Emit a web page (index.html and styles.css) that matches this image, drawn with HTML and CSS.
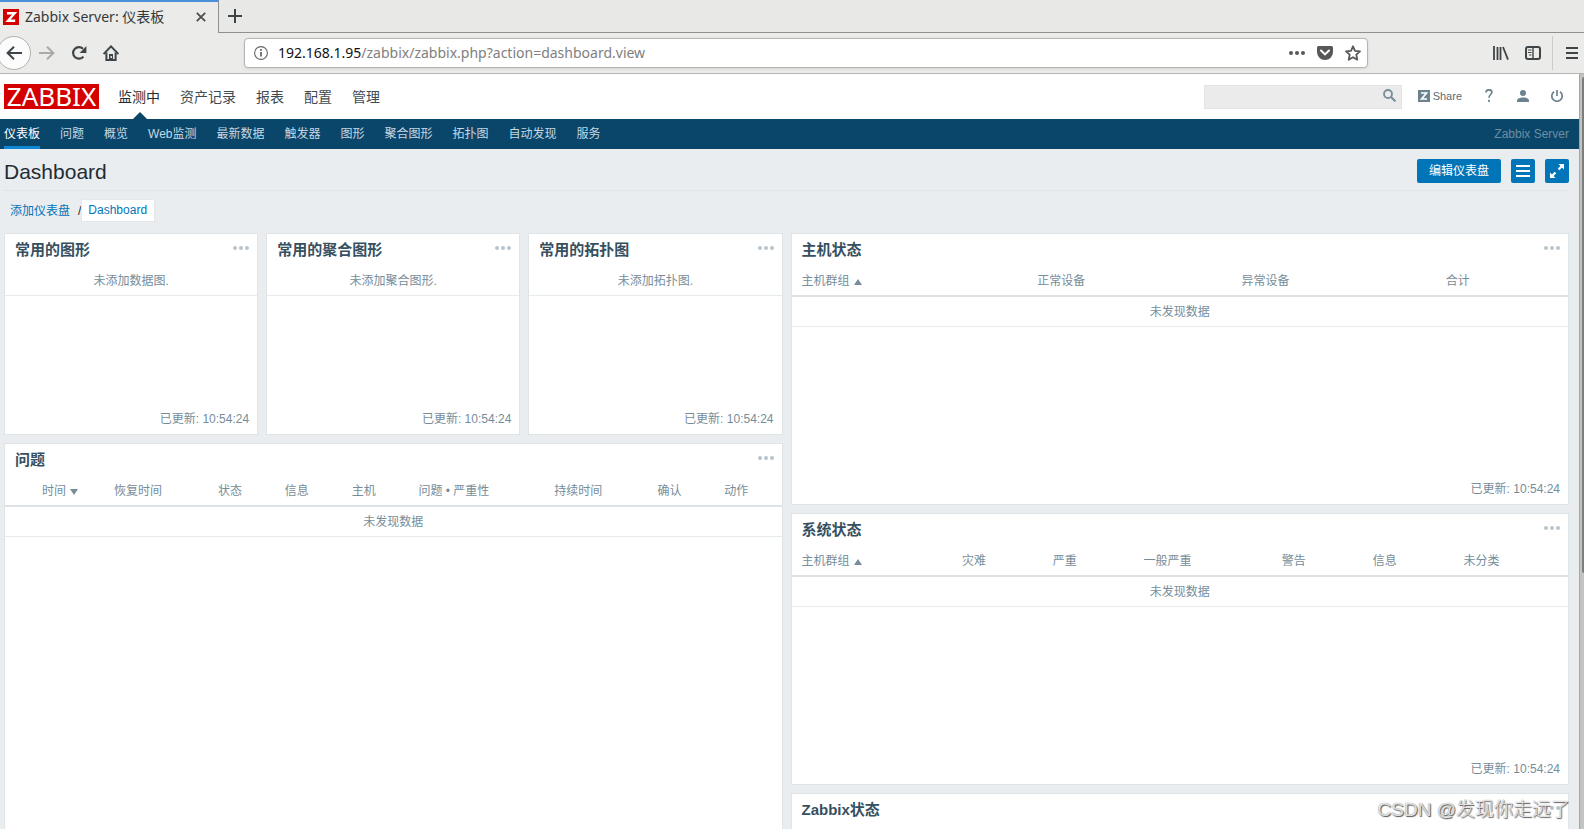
FILE: index.html
```html
<!DOCTYPE html>
<html lang="zh-CN">
<head>
<meta charset="utf-8">
<title>Zabbix Server: 仪表板</title>
<link rel="stylesheet" href="styles.css">
</head>
<body>
<div class="browser">
  <div class="tabstrip">
    <div class="tab">
      <span class="favicon" aria-hidden="true"><svg width="16" height="16" viewBox="0 0 16 16"><rect width="16" height="16" fill="#d40000"/><path d="M4 4.2h7.6L5 11.8h7.2" fill="none" stroke="#fff" stroke-width="2.4"/></svg></span>
      <span class="tab-title">Zabbix Server: 仪表板</span>
      <button class="plain tab-close" aria-label="关闭标签"><svg width="10" height="10" viewBox="0 0 10 10"><path d="M.8.8l8.4 8.4M9.2.8L.8 9.2" stroke="#4a4f50" stroke-width="1.8"/></svg></button>
    </div>
    <button class="plain tab-new" aria-label="新标签"><svg width="14" height="14" viewBox="0 0 14 14"><path d="M7 0v14M0 7h14" stroke="#3f4547" stroke-width="2"/></svg></button>
  </div>
  <div class="toolbar">
    <button class="plain back" aria-label="后退"><svg width="16" height="14" viewBox="0 0 16 14"><path d="M16 7H1.5M8 .8L1.6 7 8 13.2" fill="none" stroke="#3f4547" stroke-width="2"/></svg></button>
    <button class="plain nav-btn" aria-label="前进"><svg width="16" height="14" viewBox="0 0 16 14"><path d="M0 7h14.5M8 .8L14.4 7 8 13.2" fill="none" stroke="#a9abaa" stroke-width="2"/></svg></button>
    <button class="plain nav-btn" aria-label="刷新"><svg width="16" height="16" viewBox="0 0 16 16"><path d="M12.4 11.6A5.8 5.8 0 1 1 12 3.8" fill="none" stroke="#3f4547" stroke-width="2.2"/><path d="M15.4 1v7H8.6z" fill="#3f4547"/></svg></button>
    <button class="plain nav-btn" aria-label="主页"><svg width="16" height="16" viewBox="0 0 16 16"><path d="M.6 9L8 1.4 15.4 9" fill="none" stroke="#3f4547" stroke-width="2"/><path d="M3.4 7.5V15h9.2V7.5M8 9v2" fill="none" stroke="#3f4547" stroke-width="2"/><path d="M6 9h4v6H6z" fill="#3f4547"/><path d="M7.5 11h1.4v2H7.5z" fill="#eee"/></svg></button>
    <div class="urlbar">
      <svg width="14" height="14" viewBox="0 0 14 14"><circle cx="7" cy="7" r="6.4" fill="none" stroke="#666" stroke-width="1.1"/><path d="M7 6v4.6M7 3v1.8" stroke="#666" stroke-width="1.8"/></svg>
      <span class="url"><b>192.168.1.95</b>/zabbix/zabbix.php?action=dashboard.view</span>
      <button class="plain" aria-label="页面操作"><svg width="16" height="4" viewBox="0 0 16 4"><g fill="#585858"><circle cx="2" cy="2" r="2"/><circle cx="8" cy="2" r="2"/><circle cx="14" cy="2" r="2"/></g></svg></button>
      <button class="plain" aria-label="Pocket"><svg width="16" height="14" viewBox="0 0 16 14"><path d="M1.5 0h13A1.5 1.5 0 0 1 16 1.500V6A8 8 0 0 1 0 6V1.500A1.500 1.500 0 0 1 1.500 0z" fill="#585858"/><path d="M4 4.500L8 8.400l4-3.900" fill="none" stroke="#fff" stroke-width="2" stroke-linecap="round"/></svg></button>
      <button class="plain" aria-label="书签"><svg width="16" height="16" viewBox="0 0 16 16"><path d="M8 1.300l2 4.500 5 .5-3.700 3.400 1 5L8 12.200l-4.300 2.500 1-5L1 6.300l5-.5z" fill="none" stroke="#585858" stroke-width="1.800" stroke-linejoin="round"/></svg></button>
    </div>
    <div class="tools">
      <button class="plain" aria-label="书库"><svg width="16" height="14" viewBox="0 0 16 14"><path d="M1 0v14M4.500 1v13M7.500 1v13M10 1l5 12.600" stroke="#3f4547" stroke-width="1.800"/></svg></button>
      <button class="plain" aria-label="侧栏"><svg width="16" height="14" viewBox="0 0 16 14"><rect x="1" y="1" width="14" height="12" rx="2" fill="none" stroke="#3f4547" stroke-width="2"/><path d="M8 1v12" stroke="#3f4547" stroke-width="1.400"/><path d="M3 4h3.500M3 6.500h3.500M4 9h2.500" stroke="#3f4547"/></svg></button>
      <button class="plain menu-btn" aria-label="菜单"><svg width="12" height="12" viewBox="0 0 12 12"><path d="M0 1h12M0 6h12M0 11h12" stroke="#3f4547" stroke-width="2"/></svg></button>
    </div>
  </div>
</div>
<div class="viewport">
  <div class="page">
    <header class="top">
      <a class="logo" href="#">ZABBIX</a>
      <nav class="main-nav">
        <a class="active" href="#">监测中</a><a href="#">资产记录</a><a href="#">报表</a><a href="#">配置</a><a href="#">管理</a>
      </nav>
      <form class="search">
        <input type="text" aria-label="搜索">
        <button class="plain" type="button" aria-label="搜索"><svg width="13" height="13" viewBox="0 0 13 13"><circle cx="5" cy="5" r="4" fill="none" stroke="#768d99" stroke-width="1.800"/><path d="M8 8l4.400 4.400" stroke="#768d99" stroke-width="2"/></svg></button>
      </form>
      <a class="share" href="#"><svg width="12" height="12" viewBox="0 0 12 12"><rect width="12" height="12" fill="#6c838f"/><path d="M3 3h5.500L3.600 9H9" fill="none" stroke="#fff" stroke-width="1.700"/></svg>Share</a>
      <a class="icon-link" href="#" aria-label="帮助"><svg width="8" height="13" viewBox="0 0 8 13"><path d="M1 3.600C1 1.600 2.400.8 4 .8s2.900.9 2.900 2.500C6.900 5.400 4 5.800 4 8.800M4 10.700V13" fill="none" stroke="#6c838f" stroke-width="1.700"/></svg></a>
      <a class="icon-link" href="#" aria-label="用户"><svg width="12" height="12" viewBox="0 0 12 12"><circle cx="6" cy="3" r="3" fill="#6c838f"/><path d="M0 12V10.500C0 8.500 3 7.400 6 7.400s6 1.100 6 3.100V12z" fill="#6c838f"/></svg></a>
      <a class="icon-link" href="#" aria-label="退出"><svg width="12" height="12" viewBox="0 0 12 12"><path d="M3 1.800a5.200 5.200 0 1 0 6 0M6 0v6" fill="none" stroke="#6c838f" stroke-width="1.700"/></svg></a>
    </header>
    <nav class="sub-nav">
      <a class="active" href="#">仪表板</a><a href="#">问题</a><a href="#">概览</a><a href="#">Web监测</a><a href="#">最新数据</a><a href="#">触发器</a><a href="#">图形</a><a href="#">聚合图形</a><a href="#">拓扑图</a><a href="#">自动发现</a><a href="#">服务</a>
      <span class="server">Zabbix Server</span>
    </nav>
    <main>
      <div class="title-row">
        <h1>Dashboard</h1>
        <button class="btn">编辑仪表盘</button>
        <button class="btn square" aria-label="操作"><svg width="14" height="12" viewBox="0 0 14 12"><path d="M0 1h14M0 6h14M0 11h14" stroke="#fff" stroke-width="2"/></svg></button>
        <button class="btn square" aria-label="全屏"><svg width="14" height="14" viewBox="0 0 14 14"><path d="M8.500 0H14v5.500zM0 8.500V14h5.500z" fill="#fff"/><path d="M8.500 5.500L12 2M2 12l3.500-3.500" stroke="#fff" stroke-width="2.200"/></svg></button>
      </div>
      <div class="crumbs"><a href="#">添加仪表盘</a><span>/</span><a class="current" href="#">Dashboard</a></div>
      <div class="grid">
        <section class="widget w2">
          <div class="head"><h2>常用的图形</h2><button class="plain dots" aria-label="更多"><i></i><i></i><i></i></button></div>
          <p class="none">未添加数据图.</p><div class="foot">已更新: 10:54:24</div>
        </section>
        <section class="widget w2">
          <div class="head"><h2>常用的聚合图形</h2><button class="plain dots" aria-label="更多"><i></i><i></i><i></i></button></div>
          <p class="none">未添加聚合图形.</p><div class="foot">已更新: 10:54:24</div>
        </section>
        <section class="widget w2">
          <div class="head"><h2>常用的拓扑图</h2><button class="plain dots" aria-label="更多"><i></i><i></i><i></i></button></div>
          <p class="none">未添加拓扑图.</p><div class="foot">已更新: 10:54:24</div>
        </section>
        <section class="widget w6">
          <div class="head"><h2>主机状态</h2><button class="plain dots" aria-label="更多"><i></i><i></i><i></i></button></div>
          <table>
            <colgroup><col class="c31"><col class="c26"><col class="c26"><col></colgroup>
            <thead><tr><th>主机群组<span class="up"></span></th><th>正常设备</th><th>异常设备</th><th>合计</th></tr></thead>
            <tbody><tr><td colspan="4">未发现数据</td></tr></tbody>
          </table>
          <div class="foot">已更新: 10:54:24</div>
        </section>
        <section class="widget problems">
          <div class="head"><h2>问题</h2><button class="plain dots" aria-label="更多"><i></i><i></i><i></i></button></div>
          <table class="timeline">
            <colgroup><col class="p1"><col class="p1"><col class="p2"><col class="p2"><col class="p2"><col class="p3"><col class="p4"><col class="p2"><col></colgroup>
            <thead><tr><th>时间<span class="down"></span></th><th>恢复时间</th><th>状态</th><th>信息</th><th>主机</th><th>问题 • 严重性</th><th>持续时间</th><th>确认</th><th>动作</th></tr></thead>
            <tbody><tr><td colspan="9">未发现数据</td></tr></tbody>
          </table>
        </section>
        <section class="widget w6">
          <div class="head"><h2>系统状态</h2><button class="plain dots" aria-label="更多"><i></i><i></i><i></i></button></div>
          <table>
            <colgroup><col class="s1"><col class="s2"><col class="s2"><col class="s3"><col class="s2"><col class="s2"><col></colgroup>
            <thead><tr><th>主机群组<span class="up"></span></th><th>灾难</th><th>严重</th><th>一般严重</th><th>警告</th><th>信息</th><th>未分类</th></tr></thead>
            <tbody><tr><td colspan="7">未发现数据</td></tr></tbody>
          </table>
          <div class="foot">已更新: 10:54:24</div>
        </section>
        <section class="widget w6">
          <div class="head"><h2>Zabbix状态</h2><button class="plain dots" aria-label="更多"><i></i><i></i><i></i></button></div>
        </section>
      </div>
    </main>
  </div>
  <div class="scrollbar"><div class="thumb"></div></div>
  <div class="watermark">CSDN @发现你走远了</div>
</div>
</body>
</html>
```
FILE: styles.css
```css
* { box-sizing: border-box; }
body {
  margin: 0;
  height: 100vh;
  overflow: hidden;
  display: flex;
  flex-direction: column;
  font: 12px/18px "Liberation Sans", "Noto Sans CJK SC", sans-serif;
  color: #1f2c33;
}
a { color: inherit; text-decoration: none; }
svg { display: block; flex: none; }
.plain { background: none; border: 0; padding: 0; display: flex; align-items: center; justify-content: center; }

.browser { background: #ebebe9; border-bottom: 1px solid #b4b4b0; font-family: "Noto Sans", "Noto Sans CJK SC", sans-serif; }
.tabstrip { display: flex; height: 33px; background: #e8e8e6; }
.tab { display: flex; align-items: center; width: 219px; padding: 0 12px 2px 3px; background: #ebebe9; border-top: 2px solid #4a90d9; border-right: 1px solid #8f918e; }
.tab-title { flex: 1; padding-left: 6px; font-size: 14px; color: #33393b; white-space: nowrap; }
.tab-new { flex: 1; justify-content: flex-start; padding-left: 9px; border-bottom: 1px solid #8f918e; }
.toolbar { display: flex; align-items: center; height: 40px; }
.back { width: 34px; height: 34px; margin-left: -3px; border: 1px solid #b1b1ad; border-radius: 50%; background: #fcfcfc; }
.nav-btn { width: 32px; height: 32px; }
.urlbar { flex: 1; display: flex; align-items: center; gap: 12px; height: 30px; margin-left: 117px; padding: 0 6px 0 9px; background: #fff; border: 1px solid #b4b4b0; border-radius: 4px; box-shadow: 0 1px 3px #0000001a; }
.url { flex: 1; margin-left: -2px; font-size: 14px; color: #808080; }
.url b { font-weight: 400; color: #111; }
.tools { display: flex; align-items: center; gap: 16px; padding: 0 6px 0 125px; }
.tools .menu-btn { height: 34px; margin-left: -5px; padding-left: 13px; border-left: 1px solid #cbcbc8; }

.viewport { position: relative; flex: 1; min-height: 0; display: flex; overflow: hidden; }
.page { flex: 1; min-width: 0; background: #e9edf0; }
.scrollbar { width: 5px; padding: 3px 0 0 2px; background: #c3c4c2; border-left: 1px solid #a5a6a4; }
.thumb { height: 66%; background: #7b7e7b; border-radius: 3px 0 0 3px; }

.top { display: flex; align-items: center; height: 45px; padding: 0 16px 0 4px; background: #fff; }
.logo { width: 95px; height: 25px; background: #d40000; color: #fff; font: 26px/25px "Noto Sans", sans-serif; text-align: center; }
.main-nav { display: flex; gap: 20px; margin-left: 19px; flex: 1; font-size: 14px; line-height: 46px; color: #3c4c55; }
.main-nav .active { position: relative; color: #1f2c33; }
.main-nav .active::after { content: ""; position: absolute; left: 50%; bottom: 0; margin-left: -7px; border: 8px solid transparent; border-top: 0; border-bottom-color: #0a466a; }
.search { display: flex; width: 198px; height: 24px; margin-right: 16px; background: #ebebeb; border: 1px solid #dfe4e7; }
.search input { flex: 1; min-width: 0; border: 0; background: none; }
.search button { padding: 0 5px 2px 0; }
.share { display: flex; align-items: center; gap: 3px; margin-right: 10px; padding-bottom: 2px; font-size: 11px; color: #5a6c76; }
.icon-link { display: flex; justify-content: center; width: 34px; padding-bottom: 2px; }
.icon-link:last-child { width: 12px; margin-left: 11px; }

.sub-nav { display: flex; gap: 20px; height: 30px; padding: 0 10px 0 4px; background: #0a466a; color: #c6d8e2; line-height: 30px; }
.sub-nav .active { color: #fff; border-bottom: 3px solid #0f87d3; }
.server { margin-left: auto; color: #6c8ea2; }

main { padding: 0 10px 0 4px; }
.title-row { display: flex; align-items: center; gap: 10px; height: 42px; padding-top: 3px; border-bottom: 1px solid #dfe4e7; }
h1 { flex: 1; margin: 0; padding-top: 2px; font-size: 21px; font-weight: 400; }
.btn { display: flex; align-items: center; justify-content: center; height: 24px; padding: 0 12px; border: 0; border-radius: 2px; background: #0275b8; color: #fff; font: inherit; }
.square { width: 24px; padding: 0; }
.crumbs { display: flex; align-items: center; padding: 8px 6px 11px; color: #1f2c33; }
.crumbs a { color: #0275b8; }
.crumbs span { margin-left: 8px; }
.crumbs .current { padding: 1px 7px 2px 6px; background: #fff; border: 1px solid #e4e8eb; }

.grid { display: grid; grid-template-columns: repeat(12, 1fr); grid-auto-rows: 62px; gap: 8px; }
.widget { display: flex; flex-direction: column; background: #fff; border: 1px solid #dfe4e7; color: #768d99; }
.w2 { grid-column: span 2; grid-row: span 3; }
.problems { grid-column: 1 / span 6; grid-row: 4 / span 6; }
.w6 { grid-column: 7 / span 6; grid-row: span 4; }
.head { display: flex; justify-content: space-between; align-items: center; height: 32px; padding: 0 8px 0 10px; }
h2 { margin: 0; font-size: 15px; font-weight: 700; color: #36505f; }
.dots { gap: 2px; height: 28px; align-self: flex-start; }
.dots i { width: 4px; height: 4px; border-radius: 50%; background: #b8c4cb; }
.none { margin: 0; padding: 6px 0 5px; border-bottom: 1px solid #e8ebed; text-align: center; }
table { width: 100%; table-layout: fixed; border-collapse: separate; border-spacing: 0; }
th { padding: 6px 5px 5px; border-bottom: 2px solid #dce2e5; font-weight: 400; text-align: left; white-space: nowrap; }
th:first-child { padding-left: 10px; }
.timeline th:first-child { padding-left: 37px; }
td { padding: 6px 5px 5px; height: 30px; border-bottom: 1px solid #e8ebed; text-align: center; }
.up, .down { display: inline-block; margin-left: 4px; border: 4px solid transparent; }
.up { border-top: 0; border-bottom: 6px solid #768d99; }
.down { border-bottom: 0; border-top: 6px solid #768d99; }
.foot { margin-top: auto; padding: 0 8px 6px; text-align: right; }
.c31 { width: 31%; }
.c26 { width: 26.3%; }
.p1 { width: 13.4%; }
.p2 { width: 8.6%; }
.p3 { width: 17.5%; }
.p4 { width: 13.3%; }
.s1 { width: 21.3%; }
.s2 { width: 11.7%; }
.s3 { width: 17.8%; }
.watermark { position: absolute; right: 14px; bottom: 6px; font: 300 19px/26px "Liberation Sans", "Noto Sans CJK SC", sans-serif; color: #fffc; text-shadow: 1px 1px 1px #555, 0 0 1px #777; }
```
